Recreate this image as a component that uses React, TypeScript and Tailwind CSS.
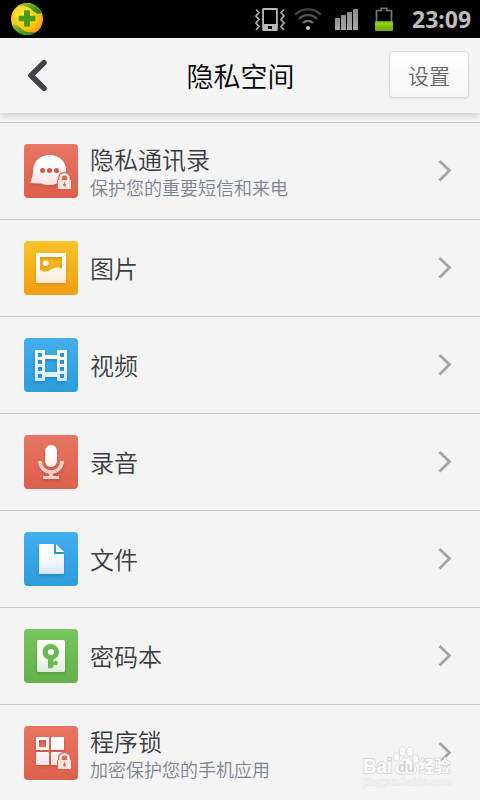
import type { ReactNode } from "react";

const cjk = "font-['Noto_Sans_CJK_SC',sans-serif]";

function Tile({ id, top, bottom, shade, overlay, children }: { id: string; top: string; bottom: string; shade: string; overlay?: ReactNode; children: ReactNode }) {
  return (
    <svg width="54" height="54" viewBox="0 0 54 54" className="block shrink-0">
      <defs>
        <linearGradient id={id} x1="0" y1="0" x2="0" y2="1">
          <stop offset="0" stopColor={top} />
          <stop offset="1" stopColor={bottom} />
        </linearGradient>
        <linearGradient id={id + "-fg"} gradientUnits="userSpaceOnUse" x1="0" y1="11" x2="0" y2="43">
          <stop offset="0" stopColor="#fff" />
          <stop offset="0.3" stopColor="#fff" />
          <stop offset="1" stopColor="#fff" stopOpacity="0.76" />
        </linearGradient>
        <filter id={id + "-sh"} x="-20%" y="-20%" width="140%" height="150%">
          <feDropShadow dx="0" dy="2" stdDeviation="1.5" floodColor={shade} floodOpacity="0.45" />
        </filter>
      </defs>
      <rect width="54" height="54" rx="4" fill={`url(#${id})`} />
      <g fill={`url(#${id}-fg)`} filter={`url(#${id}-sh)`}>{children}</g>
      {overlay}
    </svg>
  );
}

function Lock({ y }: { y: number }) {
  return (
    <g transform={`translate(34 ${y})`}>
      <path d="M1 8V5.500a5.500 5.500 0 0 1 11 0V8h1v8H0V8z" fill="#df6651" stroke="#df6651" strokeWidth="2" />
      <path d="M2.500 8V5.500a4 4 0 0 1 8 0V8" fill="none" stroke="#fdf1ee" strokeWidth="2.400" />
      <rect y="7.300" width="13" height="9" rx="0.800" fill="#fae3de" />
      <circle cx="6.500" cy="12.400" r="1.400" fill="#dc604b" />
      <path d="M6 9.500h1v3H6z" fill="#dc604b" />
    </g>
  );
}

const red = { top: "#e87563", bottom: "#dd604c", shade: "#a93220" };
const blue = { top: "#42aeee", bottom: "#2c9cdb", shade: "#1165a0" };

const rows: { title: string; sub?: string; icon: ReactNode }[] = [
  {
    title: "隐私通讯录",
    sub: "保护您的重要短信和来电",
    icon: (
      <Tile id="chat" {...red} overlay={<Lock y={28.700} />}>
        <path d="M25.500 11C35 11 42 17.500 42 26c0 8.500-7 15-16.500 15-3.500 0-6-.6-8-1.600L6.300 39c1.700-4 2.700-8 2.900-13 .3-8.500 7-15 16.300-15z" />
        <g fill="#d95843">
          <circle cx="18.500" cy="26.500" r="2.500" />
          <circle cx="25.500" cy="26.500" r="2.500" />
          <circle cx="32.500" cy="26.500" r="2.500" />
        </g>
      </Tile>
    ),
  },
  {
    title: "图片",
    icon: (
      <Tile id="pic" top="#f8c428" bottom="#f29d12" shade="#b56800">
        <path fillRule="evenodd" d="M13 12h28a1 1 0 0 1 1 1v28a1 1 0 0 1-1 1H13a1 1 0 0 1-1-1V13a1 1 0 0 1 1-1zM16 16v13c3 2 6 2 10 0s8-4 12-1V16z" />
        <circle cx="21.800" cy="22.200" r="2.700" />
      </Tile>
    ),
  },
  {
    title: "视频",
    icon: (
      <Tile id="film" {...blue}>
        <path fillRule="evenodd" d="M12 12h8a1 1 0 0 1 1 1v4h12v-4a1 1 0 0 1 1-1h8a1 1 0 0 1 1 1v29a1 1 0 0 1-1 1h-8a1 1 0 0 1-1-1v-3H21v3a1 1 0 0 1-1 1h-8a1 1 0 0 1-1-1V13a1 1 0 0 1 1-1zM21 21v13h12V21zM14 15h4v4h-4zM14 22h4v4h-4zM14 29h4v4h-4zM14 36h4v4h-4zM36 15h4v4h-4zM36 22h4v4h-4zM36 29h4v4h-4zM36 36h4v4h-4z" />
      </Tile>
    ),
  },
  {
    title: "录音",
    icon: (
      <Tile id="mic" {...red}>
        <rect x="21" y="10" width="12" height="22" rx="6" />
        <path d="M16 26c0 6.500 4.700 11 11 11s11-4.500 11-11M27 37v5" fill="none" stroke="#f9d2cb" strokeWidth="3.600" />
        <path d="M19 41h16v3H19z" fill="#f9d2cb" />
      </Tile>
    ),
  },
  {
    title: "文件",
    icon: (
      <Tile id="file" {...blue}>
        <path d="M16 12h14v10h10v19a1 1 0 0 1-1 1H16a1 1 0 0 1-1-1V13a1 1 0 0 1 1-1zM32 12l8 8h-8z" />
      </Tile>
    ),
  },
  {
    title: "密码本",
    icon: (
      <Tile id="key" top="#78c65f" bottom="#63b04c" shade="#34751f">
        <rect x="13" y="11" width="28" height="32" rx="1.500" />
        <path fillRule="evenodd" fill="#6bb954" d="M27 15a8 8 0 0 1 2.500 15.600V33l2.500-1.500 2 2-1 2.500h-3.500v2l-1.500 1.200h-4v-8.600A8 8 0 0 1 27 15zm0 5a3.100 3.100 0 1 0 0 6.200 3.100 3.100 0 0 0 0-6.200z" />
      </Tile>
    ),
  },
  {
    title: "程序锁",
    sub: "加密保护您的手机应用",
    icon: (
      <Tile id="apps" {...red} overlay={<Lock y={26.700} />}>
        <path fillRule="evenodd" d="M13 11h11a1 1 0 0 1 1 1v11a1 1 0 0 1-1 1H13a1 1 0 0 1-1-1V12a1 1 0 0 1 1-1zM15 14v7h7v-7z" />
        <rect x="27" y="11" width="13" height="13" rx="1" />
        <rect x="12" y="26" width="13" height="13" rx="1" />
        <rect x="27" y="26" width="13" height="13" rx="1" />
      </Tile>
    ),
  },
];

function StatusBar() {
  return (
    <div className="flex h-[38px] shrink-0 items-center bg-black pl-[11px] pr-[9px]">
      <svg width="32" height="34" viewBox="0 0 32 34">
        <defs>
          <radialGradient id="ball" cx="0.4" cy="0.35" r="0.7">
            <stop offset="0" stopColor="#fff04a" />
            <stop offset="0.6" stopColor="#fdc911" />
            <stop offset="1" stopColor="#f79a0c" />
          </radialGradient>
          <linearGradient id="leaf" x1="0" y1="0" x2="1" y2="1">
            <stop offset="0" stopColor="#8fc52b" />
            <stop offset="1" stopColor="#17801d" />
          </linearGradient>
        </defs>
        <circle cx="16" cy="17" r="16" fill="url(#ball)" />
        <path d="M8 3.200C17-1.500 27 3 30.500 11c-3.500 1.500-6.500.5-9-2.500C18.500 5 14 3.500 8 3.200z" fill="url(#leaf)" />
        <path d="M1 22.500C5 22 7.500 23.500 10 26.500c3.500 3.500 8.500 4.500 15.500 3.500C17 35.500 4.500 33 1 22.500z" fill="url(#leaf)" />
        <path d="M13.800 9h4.400v5.500h5.400v4h-5.400V24h-4.400v-5.500H8.400v-4h5.400z" fill="#4a9a1c" stroke="#4a9a1c" strokeWidth="1.500" strokeLinejoin="round" />
      </svg>
      <svg className="ml-auto" width="30" height="24" viewBox="0 0 30 24" fill="none">
        <g transform="translate(0 1)">
          <path fillRule="evenodd" fill="#b7b7b7" d="M8.500 0h13a1.300 1.300 0 0 1 1.300 1.300v20.400a1.300 1.300 0 0 1-1.300 1.300h-13a1.300 1.300 0 0 1-1.300-1.300V1.300A1.300 1.300 0 0 1 8.500 0zM9 2v14h12V2zM13 18v3h4v-3z" />
          <path d="M1 1.500l3 3-3 3.500 3 3.500L1 15l3 3.500-3 3.500M29 1.500l-3 3 3 3.500-3 3.500 3 3.500-3 3.500 3 3.500" stroke="#aaa" strokeWidth="1.700" />
        </g>
      </svg>
      <svg className="ml-[9px]" width="28" height="24" viewBox="0 0 28 24" fill="none" strokeWidth="2.400">
        <g transform="translate(0 .7)">
          <path d="M1 7.200a18 18 0 0 1 26 0" stroke="#444" />
          <path d="M5 11.300a12.500 12.500 0 0 1 18 0" stroke="#555" />
          <path d="M9 15.300a7 7 0 0 1 10 0" stroke="#707070" />
          <circle cx="14" cy="20.300" r="2.100" fill="#c8c8c8" />
        </g>
      </svg>
      <svg className="ml-[13px]" width="24" height="22" viewBox="0 0 24 22">
        <defs>
          <linearGradient id="bars" x1="0" y1="0" x2="0" y2="1">
            <stop offset="0" stopColor="#8b8b8b" />
            <stop offset="1" stopColor="#a8a8a8" />
          </linearGradient>
        </defs>
        <g fill="url(#bars)">
          <rect x="0" y="10" width="5" height="12" />
          <rect x="6" y="7" width="5" height="15" />
          <rect x="12" y="4" width="5" height="18" />
          <rect x="18" y="1" width="5" height="21" />
        </g>
      </svg>
      <svg className="ml-4" width="18" height="24" viewBox="0 0 18 24">
        <path d="M1.500 15V3.500h4.700V1.300h5.600v2.200h4.700V15" fill="none" stroke="#757575" strokeWidth="1.700" />
        <rect x="0" y="14.500" width="18" height="9.500" rx="1" fill="#79b400" />
        <rect x="0.500" y="14.500" width="17" height="4" fill="#93cf05" />
      </svg>
      <span className="ml-[19px] w-[59px] whitespace-nowrap font-['Noto_Sans','Open_Sans',sans-serif] text-[23px] font-bold leading-[38px] text-[#bdbdbd]">23:09</span>
    </div>
  );
}

function Watermark() {
  return (
    <svg className="pointer-events-none absolute left-[360px] top-[742px]" width="96" height="48" viewBox="0 0 96 48">
      <g fill="#fbfbfb" stroke="#dcdcdc" strokeWidth="1">
        <ellipse cx="36.500" cy="15" rx="3" ry="4.200" />
        <ellipse cx="42.500" cy="9.200" rx="3.300" ry="4.700" />
        <ellipse cx="50" cy="9.800" rx="3.300" ry="4.700" />
        <ellipse cx="55.700" cy="17" rx="3" ry="4.200" />
        <path d="M46 15.500c4 0 5.500 4.500 8.500 7.500 4.500 5 1.500 9-3 9h-11c-5.500 0-8-4.500-3.500-9 3.500-3 5-7.500 9-7.500z" />
      </g>
      <g fill="#fcfcfc" stroke="#d6d6d6" strokeWidth="2" paintOrder="stroke" className="font-['Liberation_Sans',sans-serif] font-bold">
        <text x="3" y="31" fontSize="21" textLength="29" lengthAdjust="spacingAndGlyphs">Bai</text>
        <text x="59" y="30" fontSize="15.500" strokeWidth="1.400" className={cjk}>经验</text>
      </g>
      <text x="38" y="30" fontSize="14" fill="#d4d4d4" className="font-['Liberation_Sans',sans-serif] font-bold">du</text>
      <text x="4" y="43" fontSize="11" textLength="87" lengthAdjust="spacingAndGlyphs" fill="#f8f8f8" stroke="#e4e4e4" strokeWidth="1" paintOrder="stroke" className="font-['Liberation_Serif',serif]">jingyan.baidu.com</text>
    </svg>
  );
}

export default function App() {
  return (
    <div className={`relative flex h-[800px] w-[480px] flex-col overflow-hidden bg-[#f4f4f4] ${cjk}`}>
      <StatusBar />
      <header className="z-10 grid h-[75px] shrink-0 grid-cols-[1fr_auto_1fr] items-center bg-[#f4f4f4] pl-[26px] pr-[11px] shadow-[0_2px_7px_rgba(0,0,0,0.18)]">
        <svg width="24" height="34" viewBox="0 0 24 34" fill="none" stroke="#404448" strokeWidth="5.600" strokeLinecap="round" strokeLinejoin="round">
          <path d="M18 3.700L5 16.500 18 29.300" />
        </svg>
        <h1 className="-translate-x-[7px] text-[27px] font-[350] leading-[40px] text-black">隐私空间</h1>
        <button className="mb-0.5 h-[47px] w-20 justify-self-end rounded border border-[#dcdcdc] bg-gradient-to-b from-white to-[#f5f5f5] pt-0.5 text-[21px] font-[350] leading-none text-[#666] shadow-[0_1px_2px_rgba(0,0,0,0.08)]">设置</button>
      </header>
      <ul className="mt-[9px] border-t border-[#c8c8c8]">
        {rows.map((row) => (
          <li key={row.title} className="flex h-[97px] items-center border-b border-[#c8c8c8] pl-6 pr-7">
            {row.icon}
            <div className={row.sub ? "ml-3 flex flex-col pt-0.5" : "ml-3 flex flex-col"}>
              <span className="text-2xl font-[350] leading-[30px] text-[#3a3d44]">{row.title}</span>
              {row.sub && <span className="text-lg font-[350] leading-[26px] text-[#7c8393]">{row.sub}</span>}
            </div>
            <svg className="ml-auto" width="14" height="22" viewBox="0 0 14 22" fill="none" stroke="#a0a5a5" strokeWidth="2.700">
              <path d="M1.500 1L11.500 10.500 1.500 20.500" />
            </svg>
          </li>
        ))}
      </ul>
      <Watermark />
    </div>
  );
}
